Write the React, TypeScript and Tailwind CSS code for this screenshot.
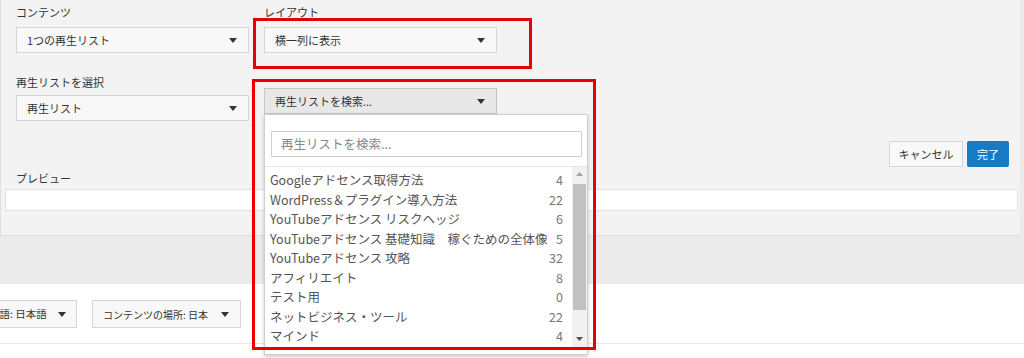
import React from 'react';

const playlists = [
  { name: 'Googleアドセンス取得方法', count: 4 },
  { name: 'WordPress＆プラグイン導入方法', count: 22 },
  { name: 'YouTubeアドセンス リスクヘッジ', count: 6 },
  { name: 'YouTubeアドセンス 基礎知識　稼ぐための全体像', count: 5 },
  { name: 'YouTubeアドセンス 攻略', count: 32 },
  { name: 'アフィリエイト', count: 8 },
  { name: 'テスト用', count: 0 },
  { name: 'ネットビジネス・ツール', count: 22 },
  { name: 'マインド', count: 4 },
];

function Caret({ className = '' }: { className?: string }) {
  return (
    <svg width="8" height="5" viewBox="0 0 8 5" className={className}>
      <path d="M0 0h8L4 5z" fill="#333" />
    </svg>
  );
}

function Select({ label, active }: { label: string; active?: boolean }) {
  return (
    <div
      className={
        'flex h-[26px] w-[233px] items-center justify-between border pl-[10px] pr-[11px] text-[11px] text-[#333] ' +
        (active ? 'border-[#c6c6c6] bg-[#e8e8e8]' : 'border-[#d6d6d6] bg-[#f8f8f8]')
      }
    >
      <span>{label}</span>
      <Caret />
    </div>
  );
}

function Label({ children }: { children: React.ReactNode }) {
  return <div className="h-4 text-[11px] leading-4 text-[#333]">{children}</div>;
}

function PlaylistDropdown() {
  return (
    <div className="absolute left-[264px] top-[114px] h-[241px] w-[324px] border border-[#cfcfcf] bg-white shadow-[0_2px_4px_rgba(0,0,0,0.2)]">
      <div className="px-[6px] pb-[9px] pt-[16px]">
        <div className="flex h-[26px] w-[311px] items-center border border-[#d0d0d0] pl-[9px] text-[12.5px] text-[#888]">
          再生リストを検索...
        </div>
      </div>
      <div className="flex border-t border-[#e6e6e6]">
        <div className="flex-1 pl-[5px] pr-[9px] pt-[4px]">
          {playlists.map((p) => (
            <div
              key={p.name}
              className="flex h-[19.5px] items-center justify-between whitespace-nowrap text-[12.5px] text-[#555]"
            >
              <span>{p.name}</span>
              <span className="text-[#777]">{p.count}</span>
            </div>
          ))}
        </div>
        <div className="flex h-[180px] w-[15px] flex-col items-center bg-[#f1f1f1]">
          <svg width="7" height="4" viewBox="0 0 7 4" className="mt-[5px]">
            <path d="M0 4h7L3.5 0z" fill="#a3a3a3" />
          </svg>
          <div className="mt-[8px] h-[126px] w-[13px] bg-[#c1c1c1]" />
          <div className="flex-1" />
          <svg width="7" height="4" viewBox="0 0 7 4" className="mb-[6px]">
            <path d="M0 0h7L3.5 4z" fill="#505050" />
          </svg>
        </div>
      </div>
    </div>
  );
}

export default function App() {
  return (
    <div
      className="relative h-[358px] w-[1024px] overflow-hidden bg-[#ebebeb]"
      style={{ fontFamily: '"Noto Sans CJK JP", "Noto Sans", sans-serif' }}
    >
      {/* Settings panel */}
      <div className="h-[236px] w-[1020px] border-b border-l border-[#dedede] bg-[#f3f3f3] pl-[4px] pt-[4px]">
        <div className="pl-[11px]">
          <div className="flex gap-[15px]">
            <div>
              <Label>コンテンツ</Label>
              <div className="mt-[7px]">
                <Select label="1つの再生リスト" />
              </div>
            </div>
            <div>
              <Label>レイアウト</Label>
              <div className="mt-[7px]">
                <Select label="横一列に表示" />
              </div>
            </div>
          </div>
          <div className="mt-[21px]">
            <Label>再生リストを選択</Label>
          </div>
          <div className="mt-[5px] flex gap-[15px]">
            <Select label="再生リスト" />
            <div className="-mt-[7px]">
              <Select label="再生リストを検索..." active />
            </div>
          </div>
        </div>
        <div className="mt-[20px] flex justify-end gap-[4px] pr-[11px]">
          <button className="h-[26px] w-[74px] border border-[#d6d6d6] bg-[#f8f8f8] text-[11px] text-[#333]">
            キャンセル
          </button>
          <button className="h-[26px] w-[42px] rounded-[2px] bg-[#167ac6] text-[11px] text-white">
            完了
          </button>
        </div>
        <div className="mt-[3px] pl-[11px]">
          <Label>プレビュー</Label>
        </div>
        <div className="mt-[3px] mr-[2px] h-[22px] border border-[#e2e2e2] bg-white" />
      </div>

      {/* Gap */}
      <div className="h-[48px]" />

      {/* Bottom bar */}
      <div className="h-[74px] bg-white pt-[16px]">
        <div className="flex gap-[15px]">
          <button className="-ml-[22px] flex h-[28px] w-[99px] items-center justify-between border border-[#d6d6d6] bg-[#f8f8f8] pl-[10px] pr-[10px] text-[10.5px] text-[#333]">
            <span>言語: 日本語</span>
            <Caret />
          </button>
          <button className="flex h-[28px] w-[149px] items-center justify-between border border-[#d6d6d6] bg-[#f8f8f8] pl-[10px] pr-[11px] text-[10px] text-[#333]">
            <span>コンテンツの場所: 日本</span>
            <Caret />
          </button>
        </div>
        <div className="mt-[15px] border-t border-[#e8e8e8]" />
      </div>

      <PlaylistDropdown />

      {/* Annotation boxes */}
      <div className="absolute left-[253px] top-[18px] h-[51px] w-[279px] border-[3px] border-[#e80000]" />
      <div className="absolute left-[252px] top-[79px] h-[271px] w-[344px] border-[3px] border-[#e80000]" />
    </div>
  );
}
